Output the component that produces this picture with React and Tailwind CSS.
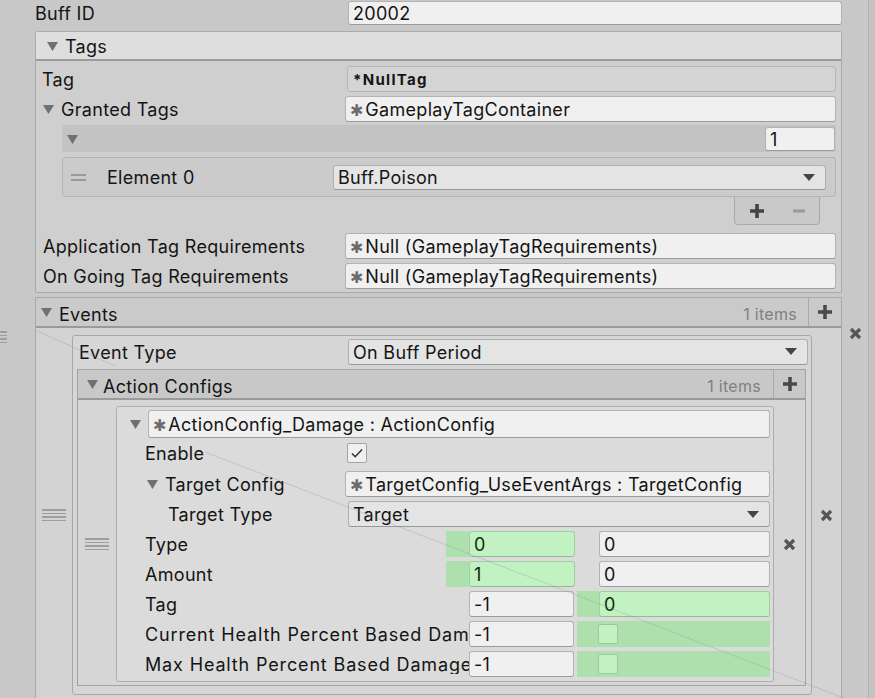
import React from 'react';

const Tri = () => (
  <svg width="11" height="10" viewBox="0 0 11 10" className="shrink-0">
    <path d="M0 1h11L5.5 10z" fill="#707070" />
  </svg>
);

const Plus = ({ color = '#4a4a4a' }) => (
  <svg width="16" height="16" viewBox="0 0 16 16">
    <path d="M8 1v14M1 8h14" stroke={color} strokeWidth="3.6" />
  </svg>
);

const Minus = () => (
  <svg width="14" height="16" viewBox="0 0 14 16">
    <path d="M1 8h12" stroke="#9c9c9c" strokeWidth="3.2" />
  </svg>
);

const Cross = () => (
  <svg width="13" height="13" viewBox="0 0 13 13">
    <path d="M2 2l9 9M11 2l-9 9" stroke="#555" strokeWidth="3.2" />
  </svg>
);

const Handle = () => (
  <div className="flex w-[24px] flex-col gap-[2px]">
    {[0, 1, 2, 3].map((i) => (
      <div key={i} className="h-[1.5px] bg-[#9d9d9d]" />
    ))}
  </div>
);

const Field = ({ children, className = '', h = 'h-[26px]' }) => (
  <div
    className={`flex ${h} items-center overflow-hidden whitespace-nowrap rounded-[3px] border border-[#b3b3b3] border-b-[#9c9c9c] bg-[#f0f0f0] px-[4px] pt-[2px] ${className}`}
  >
    {children}
  </div>
);

const GreenField = ({ children, className = '' }) => (
  <div
    className={`flex h-[26px] items-center rounded-[3px] border border-[#9fd19f] border-b-[#8cbf8c] bg-[#c2f2c2] px-[4px] pt-[2px] text-[#0f2a0f] ${className}`}
  >
    {children}
  </div>
);

const ObjField = ({ children, className = '', h }) => (
  <Field className={className} h={h}>
    <span className="mr-[2px] text-[16px] text-[#6b6b6b]">✱</span>
    {children}
  </Field>
);

const Dropdown = ({ children, className = '', h = 'h-[26px]' }) => (
  <div
    className={`flex ${h} items-center justify-between rounded-[3px] border border-[#b0b0b0] border-b-[#989898] bg-[#e4e4e4] pl-[4px] pr-[10px] ${className}`}
  >
    <span className="pt-[2px]">{children}</span>
    <svg width="12" height="7" viewBox="0 0 12 7">
      <path d="M0 0h12L6 7z" fill="#454545" />
    </svg>
  </div>
);

const Check = ({ checked }) => (
  <div className="flex h-[20px] w-[20px] items-center justify-center rounded-[2px] border border-[#a3a3a3] bg-[#f0f0f0]">
    {checked && (
      <svg width="14" height="12" viewBox="0 0 14 12">
        <path d="M2 6.5l3.2 3.2L12 2.5" stroke="#333" strokeWidth="1.6" fill="none" />
      </svg>
    )}
  </div>
);

const GreenCheck = () => (
  <div className="h-[20px] w-[20px] rounded-[2px] border border-[#98cc98] bg-[#c4f2c4]" />
);

function ActionItem() {
  return (
    <div className="w-[658px] rounded-[3px] border border-[#adadad] bg-[#dbdbdb] pb-[4px] pr-[3px]">
      <div className="mt-[3px] flex h-[28px] items-center pl-[13px]">
        <Tri />
        <ObjField className="ml-[7px] flex-1" h="h-[28px]">
          ActionConfig_Damage : ActionConfig
        </ObjField>
      </div>

      <div className="mt-[2px] flex h-[26px] items-center pl-[28px]">
        <span className="w-[202px] pt-[2px]">Enable</span>
        <Check checked />
      </div>

      <div className="mt-[5px] flex h-[26px] items-center pl-[30px]">
        <div className="flex w-[198px] items-center">
          <Tri />
          <span className="ml-[7px] pt-[2px]">Target Config</span>
        </div>
        <ObjField className="flex-1">TargetConfig_UseEventArgs : TargetConfig</ObjField>
      </div>

      <div className="mt-[4px] flex h-[26px] items-center pl-[51px]">
        <span className="w-[180px] pt-[2px]">Target Type</span>
        <Dropdown className="flex-1">Target</Dropdown>
      </div>

      <div className="mt-[4px] flex h-[26px] items-center pl-[28px]">
        <span className="w-[301px] pt-[2px]">Type</span>
        <div className="h-[26px] w-[23px] bg-[#aee0ae]" />
        <GreenField className="w-[106px]">0</GreenField>
        <Field className="ml-[24px] flex-1">0</Field>
      </div>

      <div className="mt-[4px] flex h-[26px] items-center pl-[28px]">
        <span className="w-[301px] pt-[2px]">Amount</span>
        <div className="h-[26px] w-[23px] bg-[#aee0ae]" />
        <GreenField className="w-[106px]">1</GreenField>
        <Field className="ml-[24px] flex-1">0</Field>
      </div>

      <div className="mt-[4px] flex h-[26px] items-center pl-[28px]">
        <span className="w-[324px] pt-[2px]">Tag</span>
        <Field className="w-[105px]">-1</Field>
        <div className="ml-[3px] h-[26px] w-[22px] bg-[#aee0ae]" />
        <GreenField className="flex-1">0</GreenField>
      </div>

      <div className="mt-[4px] flex h-[26px] items-center pl-[28px]">
        <span className="w-[324px] overflow-hidden whitespace-nowrap pt-[2px] tracking-[0.85px]">
          Current Health Percent Based Damage
        </span>
        <Field className="w-[105px]">-1</Field>
        <div className="ml-[3px] flex h-[26px] flex-1 items-center bg-[#aee0ae] pl-[21px]">
          <GreenCheck />
        </div>
      </div>

      <div className="mt-[4px] flex h-[26px] items-center pl-[28px]">
        <span className="w-[324px] overflow-hidden whitespace-nowrap pt-[2px] tracking-[0.85px]">
          Max Health Percent Based Damage
        </span>
        <Field className="w-[105px]">-1</Field>
        <div className="ml-[3px] flex h-[26px] flex-1 items-center bg-[#aee0ae] pl-[21px]">
          <GreenCheck />
        </div>
      </div>
    </div>
  );
}

function EventCard() {
  return (
    <div className="w-[740px] rounded-[3px] border border-[#a8a8a8] bg-[#d6d6d6] pb-[8px]">
      <div className="mt-[2px] flex h-[27px] items-center pl-[6px] pr-[3px]">
        <span className="w-[269px] pt-[2px]">Event Type</span>
        <Dropdown className="flex-1">On Buff Period</Dropdown>
      </div>

      <div className="ml-[4px] mr-[5px] mt-[4px] border border-[#a3a3a3] bg-[#d6d6d6] pb-[3px]">
        <div className="flex h-[30px] items-center border-b-2 border-[#9a9a9a] bg-[#c8c8c8]">
          <div className="flex flex-1 items-center pl-[9px]">
            <Tri />
            <span className="ml-[5px] pt-[6px]">Action Configs</span>
          </div>
          <span className="pr-[12px] pt-[4px] text-[16px] text-[#808080]">1 items</span>
          <div className="flex h-full w-[32px] items-center justify-center border-l border-[#a9a9a9]">
            <Plus />
          </div>
        </div>

        <div className="flex pt-[6px]">
          <div className="flex w-[38px] items-center justify-center">
            <Handle />
          </div>
          <ActionItem />
          <div className="flex flex-1 items-center justify-center">
            <Cross />
          </div>
        </div>
      </div>
    </div>
  );
}

export default function App() {
  return (
    <div className="relative flex h-[698px] w-[875px] overflow-hidden bg-[#c8c8c8] font-[Inter,'Noto_Sans',sans-serif] text-[18px] leading-none tracking-[0.3px] text-[#141414]">
      {/* left gutter: handle of the parent list element */}
      <div className="w-[35px] shrink-0 overflow-hidden">
        <div className="ml-[-17px] mt-[331px]">
          <Handle />
        </div>
      </div>

      <div className="w-[807px] shrink-0">
        <div className="flex h-[26px] items-center">
          <span className="w-[313px] pt-[2px]">Buff ID</span>
          <Field className="flex-1" h="h-[24px]">
            20002
          </Field>
        </div>

        {/* Tags */}
        <div className="mt-[5px] rounded-t-[3px] border border-[#aaaaaa] bg-[#cfcfcf]">
          <div className="flex h-[29px] items-center border-b-2 border-[#9a9a9a] bg-[#dedede] pl-[11px]">
            <Tri />
            <span className="ml-[7px] pt-[2px]">Tags</span>
          </div>

          <div className="pb-[3px] pl-[6px] pr-[5px] pt-[5px]">
            <div className="flex h-[26px] items-center">
              <span className="w-[305px] pt-[2px]">Tag</span>
              <div className="flex h-[26px] flex-1 items-center rounded-[3px] border border-[#b6b6b6] bg-[#d4d4d4] px-[5px] pt-[1px] text-[15px] font-bold tracking-[1.3px]">
                *NullTag
              </div>
            </div>

            <div className="mt-[4px] flex h-[26px] items-center">
              <div className="flex w-[303px] items-center pl-[1px]">
                <Tri />
                <span className="ml-[7px] pt-[2px]">Granted Tags</span>
              </div>
              <ObjField className="flex-1">GameplayTagContainer</ObjField>
            </div>

            <div className="ml-[20px] mt-[3px] flex h-[27px] items-center justify-between bg-[#c3c3c3] pl-[5px] pr-[1px]">
              <Tri />
              <Field className="w-[70px]" h="h-[24px]">
                1
              </Field>
            </div>

            <div className="ml-[20px] mt-[5px] flex h-[40px] items-center rounded-[3px] border border-[#b4b4b4] bg-[#cbcbcb] pl-[8px] pr-[9px]">
              <div className="flex w-[15px] flex-col gap-[3px]">
                <div className="h-[2px] bg-[#9a9a9a]" />
                <div className="h-[2px] bg-[#9a9a9a]" />
              </div>
              <span className="ml-[21px] w-[226px] pt-[2px]">Element 0</span>
              <Dropdown className="flex-1" h="h-[25px]">
                Buff.Poison
              </Dropdown>
            </div>

            <div className="flex justify-end pr-[16px]">
              <div className="flex h-[28px] w-[86px] items-center justify-around rounded-b-[4px] border border-t-0 border-[#a9a9a9] bg-[#c9c9c9]">
                <Plus color="#444" />
                <Minus />
              </div>
            </div>

            <div className="mt-[8px] flex h-[26px] items-center">
              <span className="w-[303px] pl-[1px] pt-[2px]">Application Tag Requirements</span>
              <ObjField className="flex-1">Null (GameplayTagRequirements)</ObjField>
            </div>

            <div className="mt-[4px] flex h-[26px] items-center">
              <span className="w-[303px] pl-[1px] pt-[2px]">On Going Tag Requirements</span>
              <ObjField className="flex-1">Null (GameplayTagRequirements)</ObjField>
            </div>
          </div>
        </div>

        {/* Events */}
        <div className="mt-[4px] border border-[#a9a9a9] bg-[#d3d3d3]">
          <div className="flex h-[30px] items-center border-b-2 border-[#9a9a9a] bg-[#cacaca]">
            <div className="flex flex-1 items-center pl-[5px]">
              <Tri />
              <span className="ml-[7px] pt-[6px]">Events</span>
            </div>
            <span className="pr-[11px] pt-[4px] text-[16px] text-[#808080]">1 items</span>
            <div className="flex h-full w-[33px] items-center justify-center border-l border-[#a9a9a9]">
              <Plus />
            </div>
          </div>

          <div className="flex pb-[10px] pt-[7px]">
            <div className="flex w-[36px] items-center justify-center">
              <Handle />
            </div>
            <EventCard />
            <div className="flex flex-1 items-center justify-center">
              <Cross />
            </div>
          </div>
        </div>
      </div>

      {/* right gutter */}
      <div className="flex flex-1">
        <div className="flex w-[26px] justify-center pt-[327px]">
          <Cross />
        </div>
        <div className="flex-1 border-l border-[#b3b3b3] bg-[#c3c3c3]" />
      </div>

      <svg className="pointer-events-none absolute inset-0" width="875" height="698">
        <path d="M35 330L115 366M205 452L875 710" stroke="#8a8a8a" strokeOpacity="0.3" strokeWidth="1" />
      </svg>
    </div>
  );
}
